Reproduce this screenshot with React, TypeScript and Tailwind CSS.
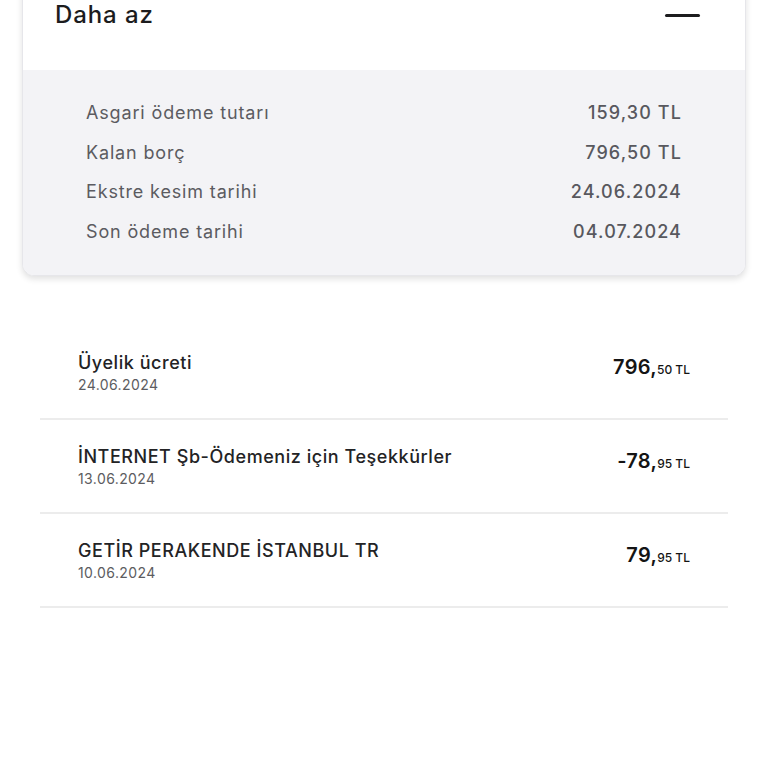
interface SummaryRow {
  label: string
  value: string
}

interface Transaction {
  title: string
  date: string
  whole: string
  cents: string
}

const summary: SummaryRow[] = [
  { label: 'Asgari ödeme tutarı', value: '159,30 TL' },
  { label: 'Kalan borç', value: '796,50 TL' },
  { label: 'Ekstre kesim tarihi', value: '24.06.2024' },
  { label: 'Son ödeme tarihi', value: '04.07.2024' },
]

const transactions: Transaction[] = [
  { title: 'Üyelik ücreti', date: '24.06.2024', whole: '796', cents: '50' },
  { title: 'İNTERNET Şb-Ödemeniz için Teşekkürler', date: '13.06.2024', whole: '-78', cents: '95' },
  { title: 'GETİR PERAKENDE İSTANBUL TR', date: '10.06.2024', whole: '79', cents: '95' },
]

export default function App() {
  return (
    <div className="min-h-screen bg-white overflow-hidden font-['Inter',sans-serif]">
      {/* Statement summary card */}
      <div className="mx-[22px] -mt-[20px] rounded-b-[12px] border border-[#e6e6ea] bg-white shadow-[0_3px_6px_rgba(0,0,0,0.12)] overflow-hidden">
        <div className="flex h-[89px] items-start justify-between pl-[32px] pr-[45px] pt-[18px]">
          <span className="text-[24px] leading-[32px] font-medium tracking-[0.9px] text-[#1c1c1e]">Daha az</span>
          <div className="mt-[15px] h-[3px] w-[35px] rounded-full bg-[#1c1c1e]" />
        </div>
        <div className="bg-[#f3f3f6] px-[63px] pt-[23px] pb-[24px]">
          {summary.map(row => (
            <div key={row.label} className="flex h-[39.5px] items-center justify-between text-[18px]">
              <span className="tracking-[0.85px] text-[#5b5b61]">{row.label}</span>
              <span className="font-medium tracking-[1.1px] text-[#58585e]">{row.value}</span>
            </div>
          ))}
        </div>
      </div>

      {/* Transactions */}
      <div className="mx-[40px] mt-[50px]">
        {transactions.map(tx => (
          <div key={tx.title} className="flex items-start justify-between border-b-2 border-[#ececec] px-[38px] pt-[25px] pb-[23px]">
            <div>
              <p className="text-[18px] leading-[24px] font-medium tracking-[0.55px] text-[#232325]">{tx.title}</p>
              <p className="text-[14px] leading-[20px] tracking-[0.4px] text-[#5c5c60]">{tx.date}</p>
            </div>
            <p className="mt-[2px] leading-[28px] text-[#141414] font-semibold">
              <span className="text-[20px] tracking-[0.3px]">{tx.whole},</span>
              <span className="text-[12px] font-medium">{tx.cents} TL</span>
            </p>
          </div>
        ))}
      </div>
    </div>
  )
}
